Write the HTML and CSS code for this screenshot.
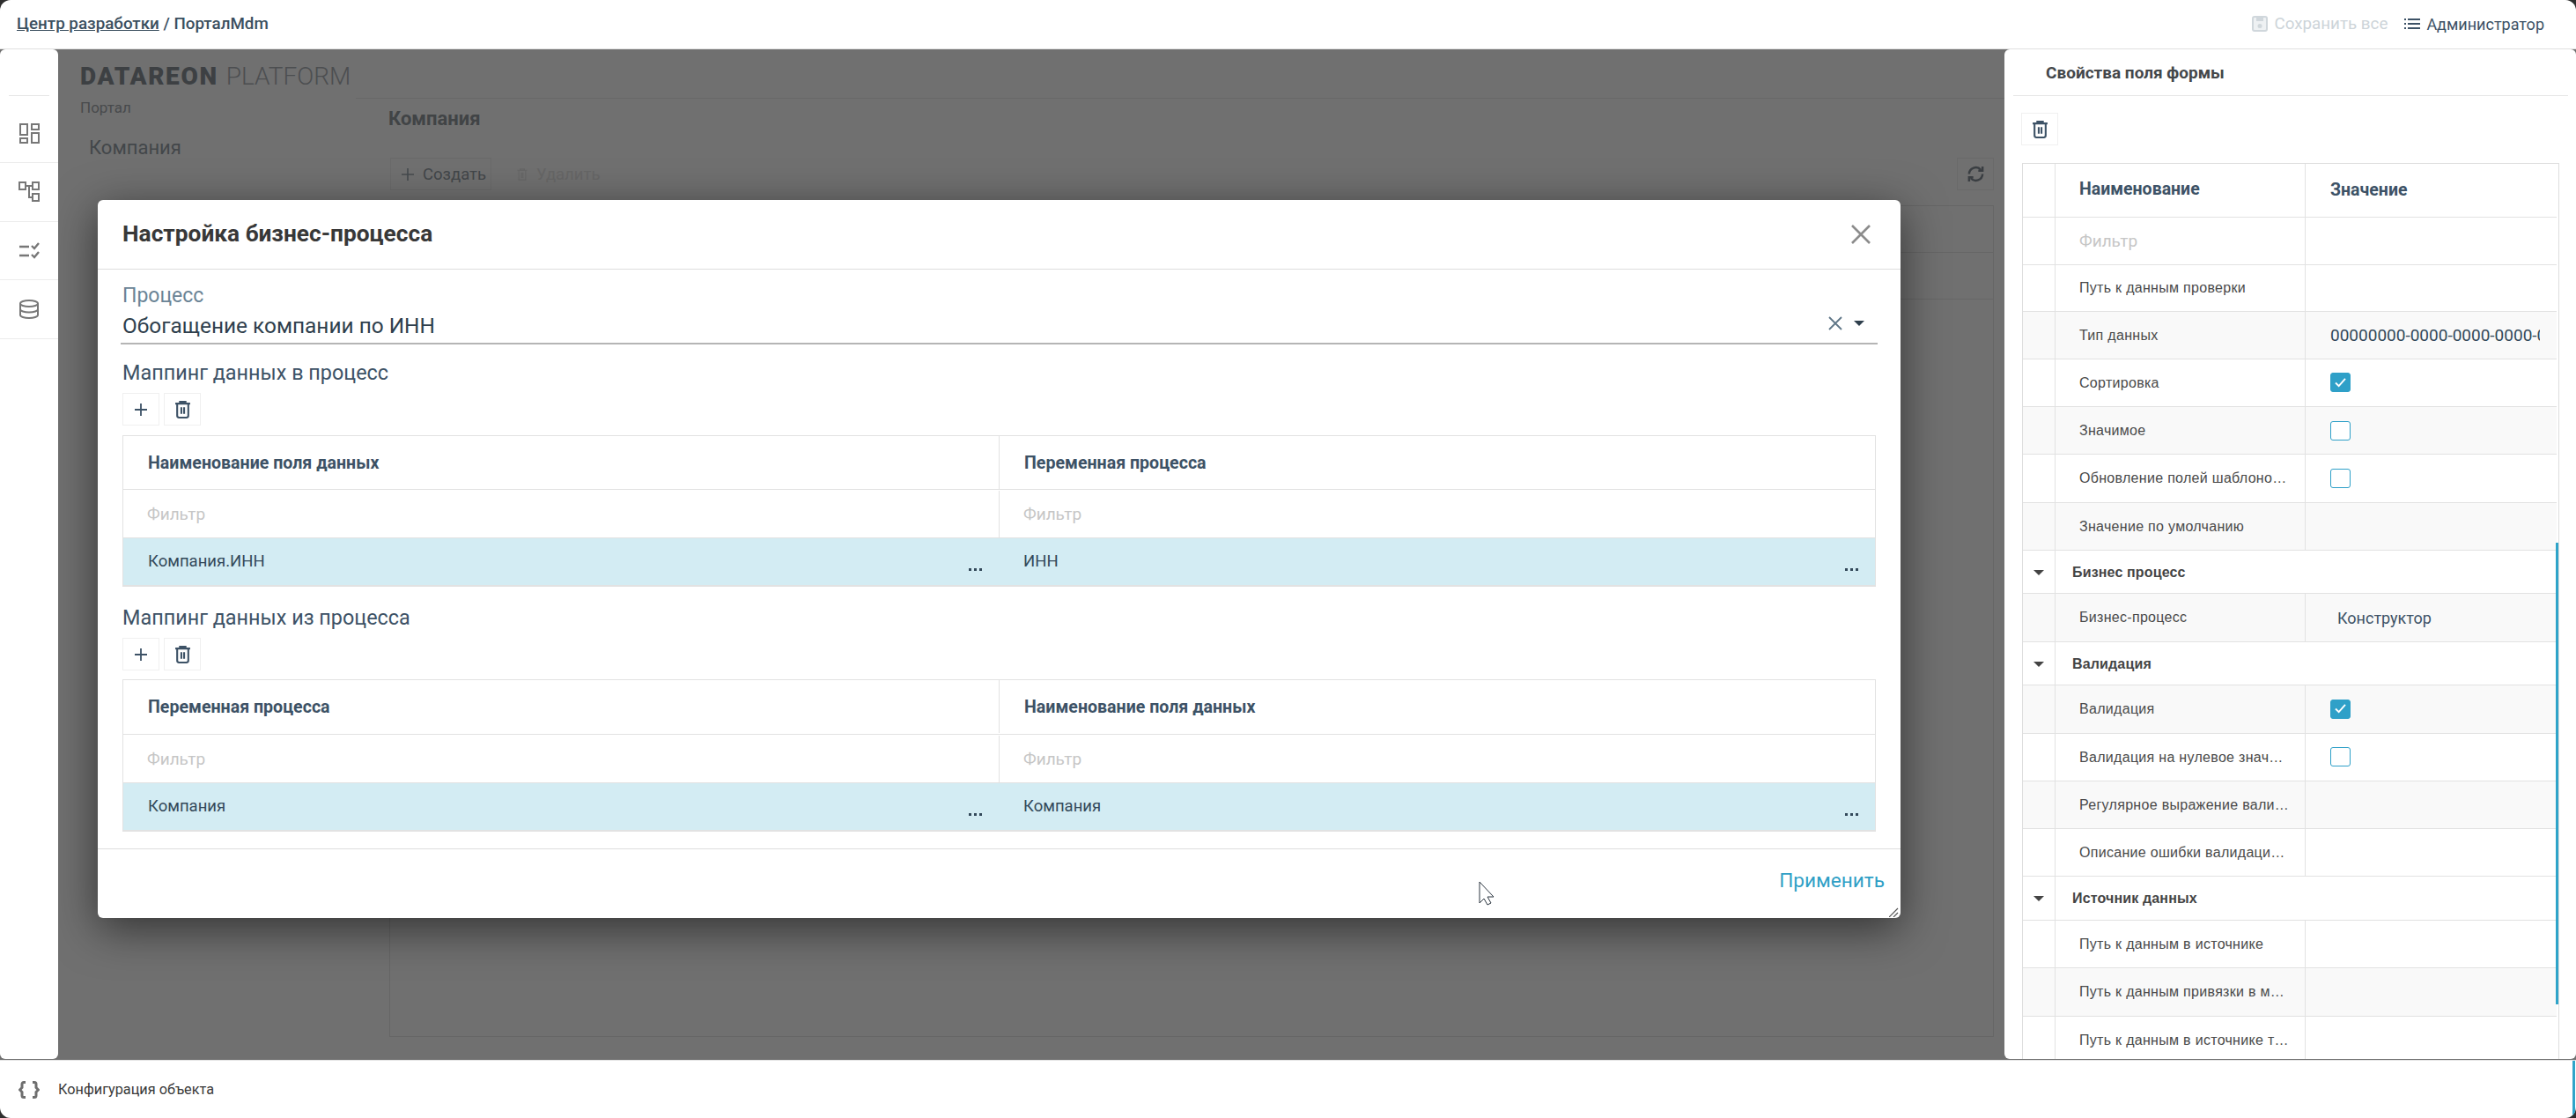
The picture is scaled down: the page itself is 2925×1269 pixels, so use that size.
FILE: index.html
```html
<!DOCTYPE html>
<html lang="ru">
<head>
<meta charset="utf-8">
<title>Настройка бизнес-процесса</title>
<link rel="stylesheet" href="styles.css">
</head>
<body>
<div class="window">
  <header class="topbar">
    <div class="crumbs"><a class="crumb-link">Центр разработки</a> / ПорталMdm</div>
    <div class="top-actions">
      <span class="save-all">
        <svg class="ico18" viewBox="0 0 18 18"><rect x="1" y="1" width="16" height="16" rx="2" fill="#eef1f3" stroke="#d0d7dc" stroke-width="2"/><rect x="5" y="2" width="8" height="4" fill="#d0d7dc"/><circle cx="9" cy="11.500" r="2.500" fill="#d0d7dc"/></svg>
        Сохранить все
      </span>
      <span class="user">
        <svg class="ico18" viewBox="0 0 18 18"><g fill="#3d5266"><rect x="0" y="3" width="2" height="2"/><rect x="0" y="8" width="2" height="2"/><rect x="0" y="13" width="2" height="2"/><rect x="4" y="3" width="14" height="2"/><rect x="4" y="8" width="14" height="2"/><rect x="4" y="13" width="14" height="2"/></g></svg>
        Администратор
      </span>
    </div>
  </header>

  <div class="middle">
    <nav class="sidebar">
      <div class="side-top"><div class="side-rule"></div></div>
      <div class="side-item">
        <svg class="side-ico" viewBox="0 0 24 24" fill="none" stroke="#777" stroke-width="2"><rect x="2" y="2" width="8" height="12"/><rect x="15" y="2" width="8" height="6"/><rect x="2" y="18" width="8" height="5"/><rect x="15" y="12" width="8" height="11"/></svg>
      </div>
      <div class="side-item">
        <svg class="side-ico" viewBox="0 0 24 24" fill="none" stroke="#777" stroke-width="2"><rect x="1" y="1" width="7" height="8"/><rect x="16" y="1" width="7" height="8"/><rect x="16" y="14" width="7" height="8"/><path d="M8 5h8M12 5v13h4"/></svg>
      </div>
      <div class="side-item">
        <svg class="side-ico" viewBox="0 0 24 24" fill="none" stroke="#777" stroke-width="2.400"><path d="M1 8h11M1 18h11"/><path d="M15 7l3 3 5-6M15 17l3 3 5-6"/></svg>
      </div>
      <div class="side-item">
        <svg class="side-ico" viewBox="0 0 24 24" fill="none" stroke="#777" stroke-width="2"><ellipse cx="12" cy="5.500" rx="10" ry="3.500"/><path d="M2 5.500v13c0 2 4.500 3.500 10 3.500s10-1.500 10-3.500v-13"/><path d="M2 12c0 2 4.500 3.500 10 3.500s10-1.500 10-3.500"/></svg>
      </div>
    </nav>

    <main class="stage">
      <section class="app-nav">
        <div class="logo"><b>DATAREON</b> <span>PLATFORM</span></div>
        <div class="logo-sub">Портал</div>
        <div class="nav-item">Компания</div>
      </section>
      <section class="app-main">
        <div class="app-head"></div>
        <h2 class="app-title">Компания</h2>
        <div class="app-toolbar">
          <span class="app-btn">
            <svg class="ico14" viewBox="0 0 14 14" stroke="#454a4e" stroke-width="1.600"><path d="M7 0v14M0 7h14"/></svg>Создать
          </span>
          <span class="app-btn-off">
            <svg class="ico14" viewBox="0 0 14 18" fill="none" stroke="#676767" stroke-width="1.600"><path d="M0 3h14M4 3V1h6v2M2 3v14h10V3M6 6v8M8 6v8"/></svg>Удалить
          </span>
          <span class="app-refresh">
            <svg class="ico20" viewBox="0 0 22 22" fill="none" stroke="#3a3e42" stroke-width="2.600"><path d="M3 11a8 8 0 0 1 14-5"/><path d="M14 7h5V2"/><path d="M19 11a8 8 0 0 1-14 5"/><path d="M8 15H3v5"/></svg>
          </span>
        </div>
        <div class="app-table">
          <div class="app-table-row"></div>
          <div class="app-table-row"></div>
        </div>
      </section>

      <div class="modal">
        <div class="modal-head">
          <h1 class="modal-title">Настройка бизнес-процесса</h1>
          <svg class="modal-close" viewBox="0 0 22 22" stroke="#8c8c8c" stroke-width="2.600"><path d="M1 1l20 20M21 1L1 21"/></svg>
        </div>
        <div class="modal-body">
          <div class="field">
            <div class="field-label">Процесс</div>
            <div class="field-input">
              <span class="field-value">Обогащение компании по ИНН</span>
              <svg class="field-clear" viewBox="0 0 16 16" stroke="#5f7687" stroke-width="1.800"><path d="M1 1l14 14M15 1L1 15"/></svg>
              <span class="caret caret-dark"></span>
            </div>
          </div>

          <h3 class="section-title">Маппинг данных в процесс</h3>
          <div class="tools">
            <span class="tool"><svg class="ico14" viewBox="0 0 14 14" stroke="#3d5266" stroke-width="1.800"><path d="M7 0v14M0 7h14"/></svg></span>
            <span class="tool"><svg class="ico-trash" viewBox="0 0 16 19" fill="none" stroke="#3d5266" stroke-width="2"><path d="M0 3h16M5 3V1h6v2M2 3v13a2 2 0 0 0 2 2h8a2 2 0 0 0 2-2V3M6.500 7v7M9.500 7v7"/></svg></span>
          </div>
          <div class="grid-table">
            <div class="gt-row gt-head"><div class="gt-cell">Наименование поля данных</div><div class="gt-cell">Переменная процесса</div></div>
            <div class="gt-row gt-filter"><div class="gt-cell">Фильтр</div><div class="gt-cell">Фильтр</div></div>
            <div class="gt-row gt-sel"><div class="gt-cell">Компания.ИНН<span class="dots"><i></i><i></i><i></i></span></div><div class="gt-cell">ИНН<span class="dots"><i></i><i></i><i></i></span></div></div>
          </div>

          <h3 class="section-title section-second">Маппинг данных из процесса</h3>
          <div class="tools tools-second">
            <span class="tool"><svg class="ico14" viewBox="0 0 14 14" stroke="#3d5266" stroke-width="1.800"><path d="M7 0v14M0 7h14"/></svg></span>
            <span class="tool"><svg class="ico-trash" viewBox="0 0 16 19" fill="none" stroke="#3d5266" stroke-width="2"><path d="M0 3h16M5 3V1h6v2M2 3v13a2 2 0 0 0 2 2h8a2 2 0 0 0 2-2V3M6.500 7v7M9.500 7v7"/></svg></span>
          </div>
          <div class="grid-table">
            <div class="gt-row gt-head gt-head-tall"><div class="gt-cell">Переменная процесса</div><div class="gt-cell">Наименование поля данных</div></div>
            <div class="gt-row gt-filter"><div class="gt-cell">Фильтр</div><div class="gt-cell">Фильтр</div></div>
            <div class="gt-row gt-sel"><div class="gt-cell">Компания<span class="dots"><i></i><i></i><i></i></span></div><div class="gt-cell">Компания<span class="dots"><i></i><i></i><i></i></span></div></div>
          </div>
        </div>
        <div class="modal-foot"><span class="apply">Применить</span></div>
        <svg class="resize" viewBox="0 0 11 11" stroke="#555" stroke-width="1.200"><path d="M0 11L10 1M5 11l5-5"/></svg>
      </div>

      <svg class="pointer" viewBox="0 0 19 28"><path d="M1 1v24l5-5 4 7 4-2-4-7h7z" fill="#fff" stroke="#2c3640" stroke-width="1"/></svg>
    </main>

    <aside class="props">
      <h2 class="props-title">Свойства поля формы</h2>
      <div class="props-tools">
        <span class="tool"><svg class="ico-trash" viewBox="0 0 16 19" fill="none" stroke="#3d5266" stroke-width="2"><path d="M0 3h16M5 3V1h6v2M2 3v13a2 2 0 0 0 2 2h8a2 2 0 0 0 2-2V3M6.500 7v7M9.500 7v7"/></svg></span>
      </div>
      <div class="pt">
        <div class="pt-row pt-head"><div class="c0"></div><div class="c1">Наименование</div><div class="c2">Значение</div></div>
        <div class="pt-row pt-filter"><div class="c0"></div><div class="c1">Фильтр</div><div class="c2"></div></div>
        <div class="pt-row pt-short"><div class="c0"></div><div class="c1">Путь к данным проверки</div><div class="c2"></div></div>
        <div class="pt-row pt-alt"><div class="c0"></div><div class="c1">Тип данных</div><div class="c2"><span class="pt-guid">00000000-0000-0000-0000-000000000000</span></div></div>
        <div class="pt-row"><div class="c0"></div><div class="c1">Сортировка</div><div class="c2"><span class="check on"><svg viewBox="0 0 14 12" fill="none" stroke="#fff" stroke-width="2"><path d="M1 6l4 4 8-9"/></svg></span></div></div>
        <div class="pt-row pt-alt"><div class="c0"></div><div class="c1">Значимое</div><div class="c2"><span class="check"></span></div></div>
        <div class="pt-row"><div class="c0"></div><div class="c1">Обновление полей шаблонов страниц</div><div class="c2"><span class="check"></span></div></div>
        <div class="pt-row pt-alt"><div class="c0"></div><div class="c1">Значение по умолчанию</div><div class="c2"></div></div>
        <div class="pt-row pt-group"><div class="c0"><span class="caret"></span></div><div class="cg">Бизнес процесс</div></div>
        <div class="pt-row pt-alt"><div class="c0"></div><div class="c1">Бизнес-процесс</div><div class="c2"><span class="pt-link">Конструктор</span></div></div>
        <div class="pt-row pt-group"><div class="c0"><span class="caret"></span></div><div class="cg">Валидация</div></div>
        <div class="pt-row pt-alt"><div class="c0"></div><div class="c1">Валидация</div><div class="c2"><span class="check on"><svg viewBox="0 0 14 12" fill="none" stroke="#fff" stroke-width="2"><path d="M1 6l4 4 8-9"/></svg></span></div></div>
        <div class="pt-row"><div class="c0"></div><div class="c1">Валидация на нулевое значение</div><div class="c2"><span class="check"></span></div></div>
        <div class="pt-row pt-alt"><div class="c0"></div><div class="c1">Регулярное выражение валидации</div><div class="c2"></div></div>
        <div class="pt-row"><div class="c0"></div><div class="c1">Описание ошибки валидации поля</div><div class="c2"></div></div>
        <div class="pt-row pt-group"><div class="c0"><span class="caret"></span></div><div class="cg">Источник данных</div></div>
        <div class="pt-row"><div class="c0"></div><div class="c1">Путь к данным в источнике</div><div class="c2"></div></div>
        <div class="pt-row pt-alt"><div class="c0"></div><div class="c1">Путь к данным привязки в модели</div><div class="c2"></div></div>
        <div class="pt-row"><div class="c0"></div><div class="c1">Путь к данным в источнике типа</div><div class="c2"></div></div>
        <div class="pt-scroll"></div>
      </div>
    </aside>
  </div>

  <footer class="bottombar">
    <svg class="braces" viewBox="0 0 24 20" fill="none" stroke="#6f6f6f" stroke-width="3"><path d="M8 1.500H6A2 2 0 0 0 4 3.500v4L1.500 10 4 12.500v4a2 2 0 0 0 2 2h2"/><path d="M16 1.500h2a2 2 0 0 1 2 2v4l2.500 2.500-2.500 2.500v4a2 2 0 0 1-2 2h-2"/></svg>
    <span class="bottom-text">Конфигурация объекта</span>
    <span class="bottom-scroll"></span>
  </footer>
</div>
</body>
</html>
```

FILE: styles.css
```css
* { box-sizing: border-box; }
html, body { margin: 0; height: 100%; }
body { background: #2e2e2e; font-family: Roboto, "Noto Sans", sans-serif; overflow: hidden; }
h1, h2, h3 { margin: 0; font-weight: 500; }

.window { width: 2925px; height: 1269px; background: #fff; border-radius: 12px; overflow: hidden; display: flex; flex-direction: column; }

.topbar { height: 56px; flex: none; display: flex; align-items: center; justify-content: space-between; padding: 0 36px 1px 19px; border-bottom: 1px solid #e0e0e0; }
.crumbs { font-size: 18.800px; font-weight: 500; color: #3b4f5f; }
.crumb-link { text-decoration: underline; }
.top-actions { display: flex; align-items: center; gap: 19px; font-size: 18px; }
.save-all { display: flex; align-items: center; gap: 7px; color: #cdd4d9; font-size: 18.800px; }
.user { display: flex; align-items: center; gap: 7px; color: #3d5266; }
.ico18 { width: 18px; height: 18px; flex: none; }
.ico14 { width: 14px; height: 14px; flex: none; }
.ico20 { width: 21px; height: 21px; }
.ico-trash { width: 17px; height: 20px; }

.middle { height: 1147px; flex: none; display: flex; background: #707070; }

.sidebar { width: 66px; flex: none; height: 1146px; background: #fff; border-radius: 6px; }
.side-top { height: 53px; padding: 0 10px; display: flex; align-items: flex-end; }
.side-rule { height: 1px; width: 47px; background: #e6e6e6; }
.side-item { height: 66.500px; display: flex; align-items: center; justify-content: center; border-bottom: 1px solid #ececec; }
.side-top + .side-item { height: 76px; padding-top: 8px; }
.side-ico { width: 24px; height: 24px; }

.stage { flex: 1; min-width: 0; position: relative; display: flex; background: #707070; overflow: hidden; }

.app-nav { width: 338px; flex: none; padding: 21px 0 0 25px; color: #444; }
.logo { font-size: 28px; line-height: 20px; height: 20px; white-space: nowrap; color: #4c4e50; }
.logo b { font-weight: 900; color: #3d4043; letter-spacing: 1.700px; }
.logo span { font-weight: 300; margin-left: 2px; }
.logo-sub { font-size: 17px; color: #484a4c; margin-top: 15px; line-height: 20px; }
.nav-item { font-size: 22px; color: #43474a; margin: 23px 0 0 10px; line-height: 26px; }

.app-main { flex: 1; min-width: 0; display: flex; flex-direction: column; padding: 0 12px 26px 0; }
.app-head { height: 56px; flex: none; border-bottom: 1px solid #686868; margin: 0 -12px 0 0; }
.app-title { font-size: 22px; font-weight: 700; color: #414446; line-height: 26px; margin: 10px 0 0 37px; }
.app-toolbar { height: 37px; flex: none; margin: 31px 0 17px 39px; display: flex; align-items: stretch; gap: 28px; font-size: 18.500px; }
.app-btn { display: flex; align-items: center; gap: 10px; width: 115px; padding-left: 12px; border: 1px solid #6a6a6a; color: #43474a; }
.app-btn-off { display: flex; align-items: center; gap: 9px; color: #666; }
.app-refresh { margin-left: auto; width: 42px; display: flex; align-items: center; justify-content: center; border: 1px solid #6a6a6a; }
.app-table { flex: 1; margin-left: 38px; border: 1px solid #666; }
.app-table-row { height: 53px; border-bottom: 1px solid #666; }

.modal { position: absolute; left: 45px; top: 171px; width: 2047px; height: 815px; background: #fff; border-radius: 6px; box-shadow: 0 12px 50px rgba(0, 0, 0, .55); display: flex; flex-direction: column; }
.modal-head { height: 79px; flex: none; border-bottom: 1px solid #dedede; display: flex; align-items: center; justify-content: space-between; padding: 0 34px 2px 28px; }
.modal-title { font-size: 26.300px; font-weight: 700; color: #383838; line-height: 30px; }
.modal-close { width: 22px; height: 22px; margin-top: 1px; }
.modal-body { flex: 1; padding: 16px 28px 0; }

.field-label { font-size: 23px; line-height: 28px; color: #6b8496; }
.field-input { height: 41px; margin: 0 -2px; padding: 0 3px 0 2px; border-bottom: 2px solid #b5b5b5; display: flex; align-items: center; }
.field-value { flex: 1; font-size: 24.400px; color: #2f3f4d; }
.field-clear { width: 16px; height: 16px; margin: 0 13px 6px 0; }
.caret { display: inline-block; width: 0; height: 0; border-left: 6px solid transparent; border-right: 6px solid transparent; border-top: 6px solid #444; }
.caret-dark { border-top-color: #2f3f4d; margin: 0 12px 6px 0; }

.section-title { font-size: 23.400px; font-weight: 400; color: #3d5266; line-height: 28px; margin: 18px 0 9px 0; }
.section-second { margin-top: 21px; margin-bottom: 9px; }
.tools { display: flex; gap: 5px; height: 37px; margin-bottom: 11px; }
.tools-second { margin-bottom: 10px; }
.tool { width: 42px; height: 37px; border: 1px solid #f0f0f0; display: flex; align-items: center; justify-content: center; }

.grid-table { border: 1px solid #e2e2e2; border-bottom-width: 2px; }
.gt-row { display: grid; grid-template-columns: 994px 1fr; }
.gt-cell { position: relative; padding: 0 28px; display: flex; align-items: center; }
.gt-cell + .gt-cell { border-left: 1px solid #e2e2e2; }
.gt-head { height: 61px; border-bottom: 1px solid #e2e2e2; font-size: 19.600px; font-weight: 700; color: #3d5266; }
.gt-head-tall { height: 62px; padding-bottom: 1px; }
.gt-filter { height: 55px; border-bottom: 1px solid #e2e2e2; font-size: 19px; color: #c6c6c6; padding-top: 1px; }
.gt-filter .gt-cell { padding-left: 27px; }
.gt-sel { height: 53px; background: #d3ecf3; font-size: 18.500px; color: #33495a; }
.gt-sel .gt-cell { padding-bottom: 2px; }
.gt-sel .gt-cell + .gt-cell { border-left: 0; padding-left: 28px; }
.dots { position: absolute; right: 19px; bottom: 16px; display: flex; gap: 3px; }
.dots i { width: 3px; height: 3px; background: #33495a; }

.modal-foot { height: 79px; flex: none; border-top: 1px solid #dedede; display: flex; align-items: center; justify-content: flex-end; padding: 0 18px 8px 0; }
.apply { font-size: 22.600px; color: #2f9fc6; }
.resize { position: absolute; right: 2px; bottom: 1px; width: 11px; height: 11px; }

.pointer { position: absolute; left: 1613px; top: 944px; width: 19px; height: 28px; }

.props { width: 649px; flex: none; height: 1146px; background: #fff; border-radius: 6px; display: flex; flex-direction: column; overflow: hidden; }
.props-title { height: 53px; flex: none; margin: 0 9px 0 10px; padding: 0 0 0 37px; border-bottom: 1px solid #e6e6e6; font-size: 19px; font-weight: 700; color: #44474a; line-height: 54px; }
.props-tools { height: 76px; flex: none; padding: 19px 0 0 19px; }
.pt { position: relative; flex: 1; margin: 0 19px 0 20px; border: 1px solid #dedede; border-bottom: 0; padding-right: 2px; overflow: hidden; }
.pt-row { display: grid; grid-template-columns: 37px 284px 1fr; height: 54.300px; border-bottom: 1px solid #e2e2e2; }
.c0 { border-right: 1px solid #e2e2e2; display: flex; align-items: center; justify-content: center; }
.c1 { border-right: 1px solid #e2e2e2; padding: 0 18px 0 27px; font-family: "Liberation Sans", Arial, sans-serif; font-size: 16px; letter-spacing: .3px; color: #4a4a4a; line-height: 54px; white-space: nowrap; overflow: hidden; text-overflow: ellipsis; }
.c2 { padding-left: 28px; display: flex; align-items: center; min-width: 0; }
.cg { grid-column: 2 / 4; padding-left: 19px; font-family: "Liberation Sans", Arial, sans-serif; font-size: 16px; font-weight: 700; letter-spacing: .15px; color: #444; line-height: 50px; }
.pt-alt { background: #f9f9f9; }
.pt-head { height: 61px; }
.pt-head .c1, .pt-head .c2 { font-family: Roboto, sans-serif; font-size: 19.500px; font-weight: 700; letter-spacing: 0; color: #3d5266; }
.pt-head .c1 { line-height: 58px; }
.pt-head .c2 { padding-bottom: 2px; }
.pt-filter { height: 54px; }
.pt-filter .c1 { font-family: Roboto, sans-serif; font-size: 19px; letter-spacing: 0; color: #c6c6c6; }
.pt-short { height: 52.500px; }
.pt-short .c1 { line-height: 52px; }
.pt-group { height: 49.500px; }
.pt-guid { width: 238px; overflow: hidden; white-space: nowrap; font-size: 19px; color: #33495a; }
.pt-link { font-size: 18px; color: #3d5266; padding-left: 8px; }
.check { width: 23px; height: 22px; border: 1px solid #2fa0c8; border-radius: 3px; background: #fff; display: flex; align-items: center; justify-content: center; }
.check.on { background: #2fa0c8; }
.check svg { width: 13px; height: 11px; }
.pt-scroll { position: absolute; right: 0; top: 430px; width: 3px; height: 524px; background: #2fa4c9; }

.bottombar { flex: 1; position: relative; border-top: 1px solid #e4e4e4; display: flex; align-items: center; padding: 0 0 0 21px; gap: 21px; }
.braces { width: 24px; height: 20px; }
.bottom-text { font-size: 16.300px; color: #3a3a3a; }
.bottom-scroll { position: absolute; right: 1px; top: 0; bottom: 0; width: 3px; background: #2fa4c9; }
```
